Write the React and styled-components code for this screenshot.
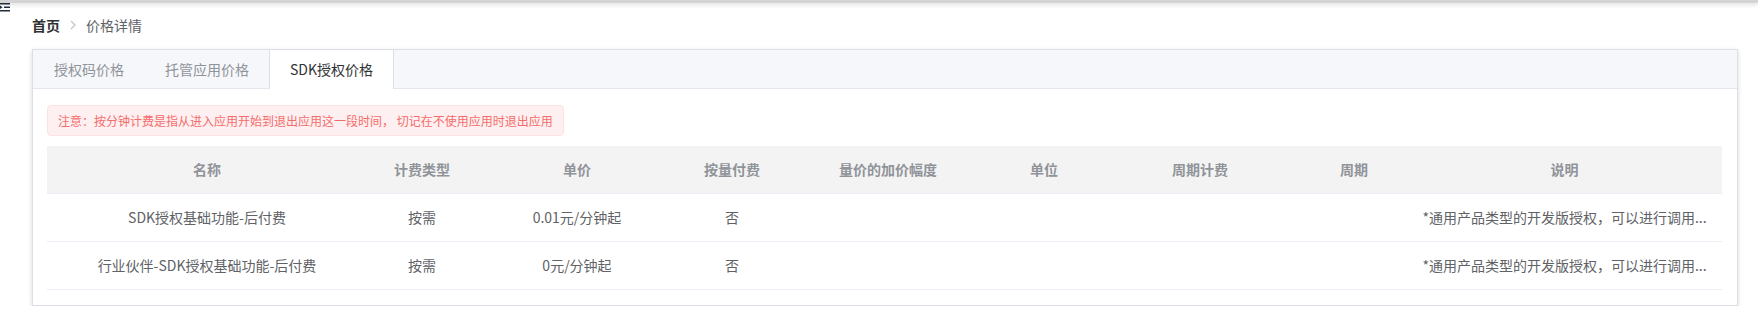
import styled, {createGlobalStyle} from "styled-components";

const GlobalStyle = createGlobalStyle`
  body {
    margin: 0;
    background: #fff;
    font-family: "Noto Sans CJK SC", "Liberation Sans", sans-serif;
  }
`;

const TopBar = styled.div`
  position: relative;
  height: 3px;
  background: #d4d4d4;
  box-shadow: 0 1px 5px rgba(0, 0, 0, .2);
`;

const FoldIcon = styled.svg`
  position: absolute;
  left: 0;
  top: 3px;
`;

const Main = styled.div`
  padding: 0 20px 0 32px;
`;

const Breadcrumb = styled.div`
  display: flex;
  align-items: center;
  padding-top: 15px;
  margin-bottom: 17px;
  font-size: 14px;
  line-height: 14px;
`;

const Crumb = styled.span`
  color: ${props => props.first ? "#303133" : "#606266"};
  font-weight: ${props => props.first ? 700 : 400};
`;

const Separator = styled.svg`
  margin: 0 10px 0 10px;
`;

const Card = styled.div`
  background: #fff;
  border: 1px solid #dcdfe6;
  box-shadow: 0 2px 4px rgba(0, 0, 0, .12), 0 0 6px rgba(0, 0, 0, .04);
`;

const TabHeader = styled.div`
  display: flex;
  height: 38px;
  background: #f5f7fa;
  border-bottom: 1px solid #e4e7ed;
`;

const Tab = styled.div`
  height: 39px;
  line-height: 39px;
  padding: 0 20px;
  margin-bottom: -1px;
  font-size: 14px;
  color: ${props => props.active ? "#303133" : "#909399"};
  background: ${props => props.active ? "#fff" : "transparent"};
  border-left: 1px solid ${props => props.active ? "#dcdfe6" : "transparent"};
  border-right: 1px solid ${props => props.active ? "#dcdfe6" : "transparent"};
  & + & {
    margin-left: -1px;
  }
`;

const Content = styled.div`
  padding: 16px 15px 15px 14px;
`;

const Alert = styled.div`
  display: inline-block;
  box-sizing: border-box;
  height: 31px;
  line-height: 29px;
  padding: 0 10px;
  font-size: 12px;
  color: #f56c6c;
  background: #fef0f0;
  border: 1px solid #fde2e2;
  border-radius: 4px;
  margin-bottom: 10px;
`;

const Table = styled.table`
  width: 100%;
  border-collapse: collapse;
  table-layout: fixed;
  font-size: 14px;
`;

const HeadCell = styled.th`
  padding: 12px 10px;
  line-height: 23px;
  background: #f3f3f3;
  color: #909399;
  font-weight: 700;
  text-align: center;
  border-bottom: 1px solid #ebeef5;
`;

const Cell = styled.td`
  padding: 12px 10px;
  line-height: 23px;
  color: #606266;
  text-align: center;
  border-bottom: 1px solid #ebeef5;
  white-space: nowrap;
`;

const columns = [
    {key: "name", title: "名称", width: 320},
    {key: "type", title: "计费类型", width: 110},
    {key: "price", title: "单价", width: 200},
    {key: "payg", title: "按量付费", width: 110},
    {key: "markup", title: "量价的加价幅度", width: 202},
    {key: "unit", title: "单位", width: 110},
    {key: "cycleFee", title: "周期计费", width: 202},
    {key: "cycle", title: "周期", width: 106},
    {key: "desc", title: "说明"},
];

const rows = [
    {name: "SDK授权基础功能-后付费", type: "按需", price: "0.01元/分钟起", payg: "否", desc: "*通用产品类型的开发版授权，可以进行调用..."},
    {name: "行业伙伴-SDK授权基础功能-后付费", type: "按需", price: "0元/分钟起", payg: "否", desc: "*通用产品类型的开发版授权，可以进行调用..."},
];

const tabs = ["授权码价格", "托管应用价格", "SDK授权价格"];

export default function App() {
    return (
        <>
            <GlobalStyle/>
            <TopBar>
                <FoldIcon width="10" height="9" viewBox="0 0 10 9">
                    <rect x="0" y="0" width="10" height="1.5" fill="#1f2d3d"/>
                    <polygon points="0,2.6 2.6,4.25 0,5.9" fill="#1f2d3d"/>
                    <rect x="4" y="3.5" width="6" height="1.5" fill="#1f2d3d"/>
                    <rect x="0" y="7" width="10" height="1.5" fill="#1f2d3d"/>
                </FoldIcon>
            </TopBar>
            <Main>
                <Breadcrumb>
                    <Crumb first>首页</Crumb>
                    <Separator width="6" height="10" viewBox="0 0 6 10">
                        <path d="M1 1 L5 5 L1 9" fill="none" stroke="#c0c4cc" strokeWidth="1.2"/>
                    </Separator>
                    <Crumb>价格详情</Crumb>
                </Breadcrumb>

                <Card>
                    <TabHeader>
                        {tabs.map((t, i) => (
                            <Tab key={t} active={i === 2}>{t}</Tab>
                        ))}
                    </TabHeader>
                    <Content>
                        <Alert>注意：按分钟计费是指从进入应用开始到退出应用这一段时间， 切记在不使用应用时退出应用</Alert>
                        <Table>
                            <colgroup>
                                {columns.map(c => <col key={c.key} style={c.width ? {width: c.width} : undefined}/>)}
                            </colgroup>
                            <thead>
                                <tr>
                                    {columns.map(c => <HeadCell key={c.key}>{c.title}</HeadCell>)}
                                </tr>
                            </thead>
                            <tbody>
                                {rows.map((r, i) => (
                                    <tr key={i}>
                                        {columns.map(c => <Cell key={c.key}>{r[c.key] || ""}</Cell>)}
                                    </tr>
                                ))}
                            </tbody>
                        </Table>
                    </Content>
                </Card>
            </Main>
        </>
    );
}
